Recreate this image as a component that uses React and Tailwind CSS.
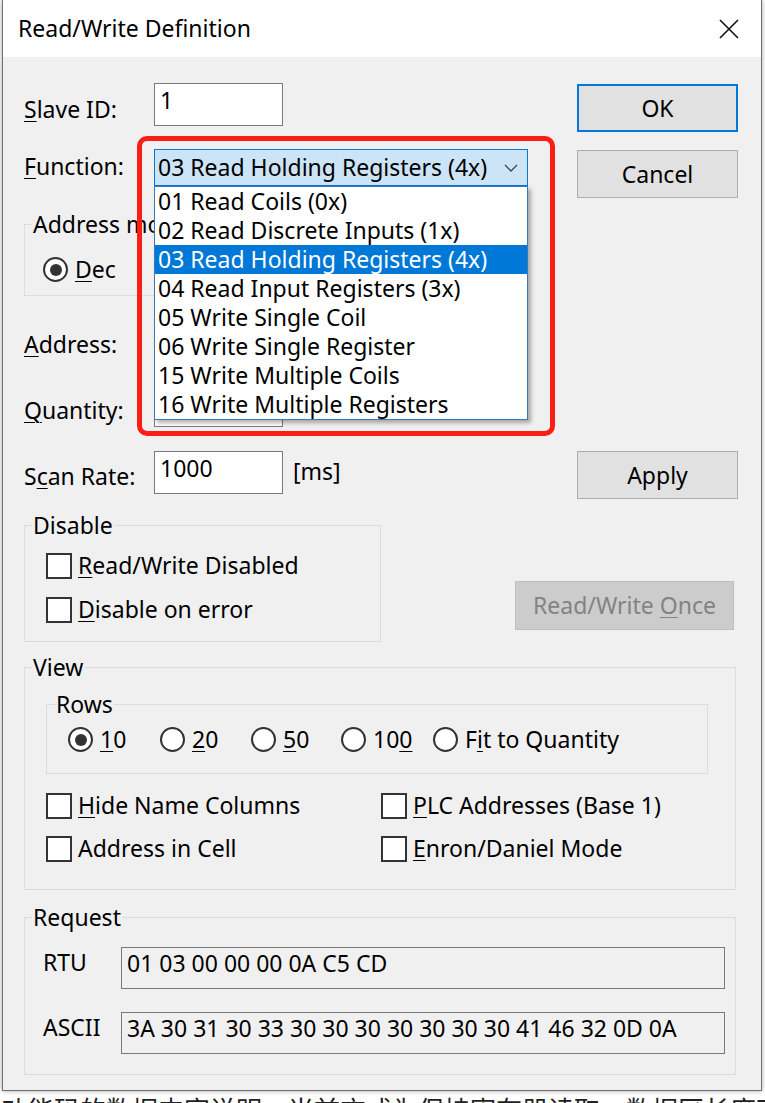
import React from "react";

const U = ({ children }) => (
  <span className="underline underline-offset-[3px] decoration-1">{children}</span>
);

function Radio({ checked }) {
  return (
    <span className="w-[25px] h-[25px] rounded-full border-2 border-[#333333] bg-white flex items-center justify-center shrink-0">
      {checked && <span className="w-[12px] h-[12px] rounded-full bg-[#333333]" />}
    </span>
  );
}

function Check() {
  return <span className="w-[26px] h-[26px] border-2 border-[#333333] bg-white shrink-0" />;
}

function Legend({ children, ml = "ml-[7px]" }) {
  return <legend className={`${ml} px-[1px] leading-[31px] whitespace-nowrap`}>{children}</legend>;
}

const items = [
  "01 Read Coils (0x)",
  "02 Read Discrete Inputs (1x)",
  "03 Read Holding Registers (4x)",
  "04 Read Input Registers (3x)",
  "05 Write Single Coil",
  "06 Write Single Register",
  "15 Write Multiple Coils",
  "16 Write Multiple Registers",
];

export default function App() {
  return (
    <div className="w-[765px] h-[1103px] bg-white overflow-hidden font-['Noto_Sans','Noto_Sans_CJK_SC',sans-serif] text-[23px] text-black">
      <div className="ml-[2px] w-[760px] h-[1091px] border-x border-b border-[#707070] bg-[#f0f0f0] shadow-[0_0_5px_rgba(0,0,0,0.35)]">
        {/* Title bar */}
        <div className="h-[57px] bg-white flex items-start justify-between">
          <div className="pl-[15px] pt-[13px] leading-[31px]">Read/Write Definition</div>
          <svg className="mt-[19px] mr-[22px]" width="20" height="20" viewBox="0 0 20 20">
            <path d="M1 1 L19 19 M19 1 L1 19" stroke="#111" strokeWidth="1.6" fill="none" />
          </svg>
        </div>

        {/* Body */}
        <div className="pl-[21px] pr-[23px]">
          <div className="flex items-start">
            {/* Left column */}
            <div className="flex-1 flex flex-col">
              <div className="mt-[26px] flex items-start">
                <div className="w-[130px] mt-[11px] leading-[31px]"><U>S</U>lave ID:</div>
                <div className="w-[129px] h-[43px] border border-[#7a7a7a] bg-white pl-[5px] pt-[1px] leading-[31px]">1</div>
              </div>

              <div className="mt-[23px] flex items-start">
                <div className="w-[130px] mt-[2px] leading-[31px]"><U>F</U>unction:</div>
                <div className="relative w-[374px] h-[37px]">
                  <div className="w-full h-full border border-[#0078d7] bg-[#cce4f7] flex items-center justify-between pl-[3px] pr-[9px] leading-[31px]">
                    <span>03 Read Holding Registers (4x)</span>
                    <svg width="14" height="8" viewBox="0 0 14 8">
                      <path d="M1 1 L7 7 L13 1" stroke="#444" strokeWidth="1.3" fill="none" />
                    </svg>
                  </div>
                  {/* Dropdown list */}
                  <div className="absolute z-10 top-[37px] left-0 w-[374px] h-[234px] border border-[#3b78b5] bg-white shadow-[3px_3px_4px_rgba(0,0,0,0.3)]">
                    {items.map((t, i) => (
                      <div
                        key={t}
                        className={`h-[29px] leading-[29px] pl-[3px] whitespace-nowrap ${i === 2 ? "bg-[#0078d7] text-white" : ""}`}
                      >
                        {t}
                      </div>
                    ))}
                  </div>
                  {/* Red annotation */}
                  <div className="absolute z-20 left-[-17px] top-[-13px] w-[418px] h-[300px] border-[5px] border-[#fa1e14] rounded-[10px] pointer-events-none" />
                </div>
              </div>

              <fieldset className="mt-[23px] w-[300px] border border-[#dcdcdc] pb-[10px]">
                <Legend>Address mode</Legend>
                <div className="mt-[14px] pl-[18px] h-[31px] flex items-center">
                  <Radio checked />
                  <span className="ml-[7px] leading-[31px]"><U>D</U>ec</span>
                  <span className="ml-[60px]"><Radio /></span>
                  <span className="ml-[7px] leading-[31px]"><U>H</U>ex</span>
                </div>
              </fieldset>

              <div className="mt-[22px] flex items-start">
                <div className="w-[130px] mt-[11px] leading-[31px]"><U>A</U>ddress:</div>
                <div className="w-[129px] h-[43px] border border-[#7a7a7a] bg-white pl-[5px] pt-[1px] leading-[31px]">0</div>
              </div>

              <div className="mt-[23px] flex items-start">
                <div className="w-[130px] mt-[11px] leading-[31px]"><U>Q</U>uantity:</div>
                <div className="w-[129px] h-[43px] border border-[#7a7a7a] bg-white pl-[5px] pt-[1px] leading-[31px]">10</div>
              </div>

              <div className="mt-[24px] flex items-start">
                <div className="w-[130px] mt-[10px] leading-[31px]">S<U>c</U>an Rate:</div>
                <div className="w-[129px] h-[43px] border border-[#7a7a7a] bg-white pl-[5px] pt-[1px] leading-[31px]">1000</div>
                <div className="ml-[10px] mt-[5px] leading-[31px]">[ms]</div>
              </div>
            </div>

            {/* Right column */}
            <div className="w-[161px] flex flex-col">
              <div className="mt-[27px] h-[48px] border-2 border-[#0078d7] bg-[#e1e1e1] flex items-center justify-center leading-[31px]">OK</div>
              <div className="mt-[18px] h-[48px] border border-[#adadad] bg-[#e1e1e1] flex items-center justify-center leading-[31px]">Cancel</div>
              <div className="mt-[253px] h-[48px] border border-[#adadad] bg-[#e1e1e1] flex items-center justify-center leading-[31px]">Apply</div>
            </div>
          </div>

          {/* Disable row */}
          <div className="mt-[11px] flex items-start">
            <fieldset className="w-[357px] border border-[#dcdcdc] pb-[16px]">
              <Legend>Disable</Legend>
              <div className="mt-[9px] pl-[21px] h-[31px] flex items-center gap-[6px]">
                <Check />
                <span className="leading-[31px]"><U>R</U>ead/Write Disabled</span>
              </div>
              <div className="mt-[13px] pl-[21px] h-[31px] flex items-center gap-[6px]">
                <Check />
                <span className="leading-[31px]"><U>D</U>isable on error</span>
              </div>
            </fieldset>
            <div className="ml-[134px] mt-[71px] w-[219px] h-[49px] border border-[#bfbfbf] bg-[#cccccc] text-[#838383] flex items-center justify-center leading-[31px]">
              <span>Read/Write <U>O</U>nce</span>
            </div>
          </div>

          {/* View */}
          <fieldset className="mt-[10px] w-[712px] border border-[#dcdcdc] pb-[25px]">
            <Legend>View</Legend>
            <fieldset className="mt-[6px] ml-[21px] w-[662px] border border-[#dcdcdc] pb-[18px]">
              <Legend ml="ml-[8px]">Rows</Legend>
              <div className="mt-[4px] pl-[21px] h-[31px] flex items-center">
                <div className="w-[92px] flex items-center gap-[7px]"><Radio checked /><span className="leading-[31px]"><U>1</U>0</span></div>
                <div className="w-[91px] flex items-center gap-[7px]"><Radio /><span className="leading-[31px]"><U>2</U>0</span></div>
                <div className="w-[90px] flex items-center gap-[7px]"><Radio /><span className="leading-[31px]"><U>5</U>0</span></div>
                <div className="w-[92px] flex items-center gap-[7px]"><Radio /><span className="leading-[31px]">10<U>0</U></span></div>
                <div className="flex items-center gap-[7px]"><Radio /><span className="leading-[31px]">F<U>i</U>t to Quantity</span></div>
              </div>
            </fieldset>
            <div className="mt-[16px] pl-[21px] h-[31px] flex items-center">
              <div className="w-[335px] flex items-center gap-[6px]"><Check /><span className="leading-[31px]"><U>H</U>ide Name Columns</span></div>
              <div className="flex items-center gap-[6px]"><Check /><span className="leading-[31px]"><U>P</U>LC Addresses (Base 1)</span></div>
            </div>
            <div className="mt-[12px] pl-[21px] h-[31px] flex items-center">
              <div className="w-[335px] flex items-center gap-[6px]"><Check /><span className="leading-[31px]">Address in Cell</span></div>
              <div className="flex items-center gap-[6px]"><Check /><span className="leading-[31px]"><U>E</U>nron/Daniel Mode</span></div>
            </div>
          </fieldset>

          {/* Request */}
          <fieldset className="mt-[12px] w-[712px] border border-[#dcdcdc] pb-[20px]">
            <Legend>Request</Legend>
            <div className="mt-[14px] pl-[18px] flex items-start">
              <div className="w-[78px] leading-[31px]">RTU</div>
              <div className="w-[604px] h-[42px] border border-[#7a7a7a] bg-[#f0f0f0] pl-[5px] leading-[31px] whitespace-nowrap">01 03 00 00 00 0A C5 CD</div>
            </div>
            <div className="mt-[23px] pl-[18px] flex items-start">
              <div className="w-[78px] leading-[31px]">ASCII</div>
              <div className="w-[604px] h-[42px] border border-[#7a7a7a] bg-[#f0f0f0] pl-[5px] leading-[31px] whitespace-nowrap">3A 30 31 30 33 30 30 30 30 30 30 30 41 46 32 0D 0A</div>
            </div>
          </fieldset>
        </div>
      </div>
      <div className="mt-[3px] pl-[2px] text-[26px] leading-[30px] font-['Noto_Sans_CJK_SC',sans-serif] text-[#222] whitespace-nowrap">
        功能码的数据内容说明：当前方式为保持寄存器读取，数据区长度可以设置。
      </div>
    </div>
  );
}
